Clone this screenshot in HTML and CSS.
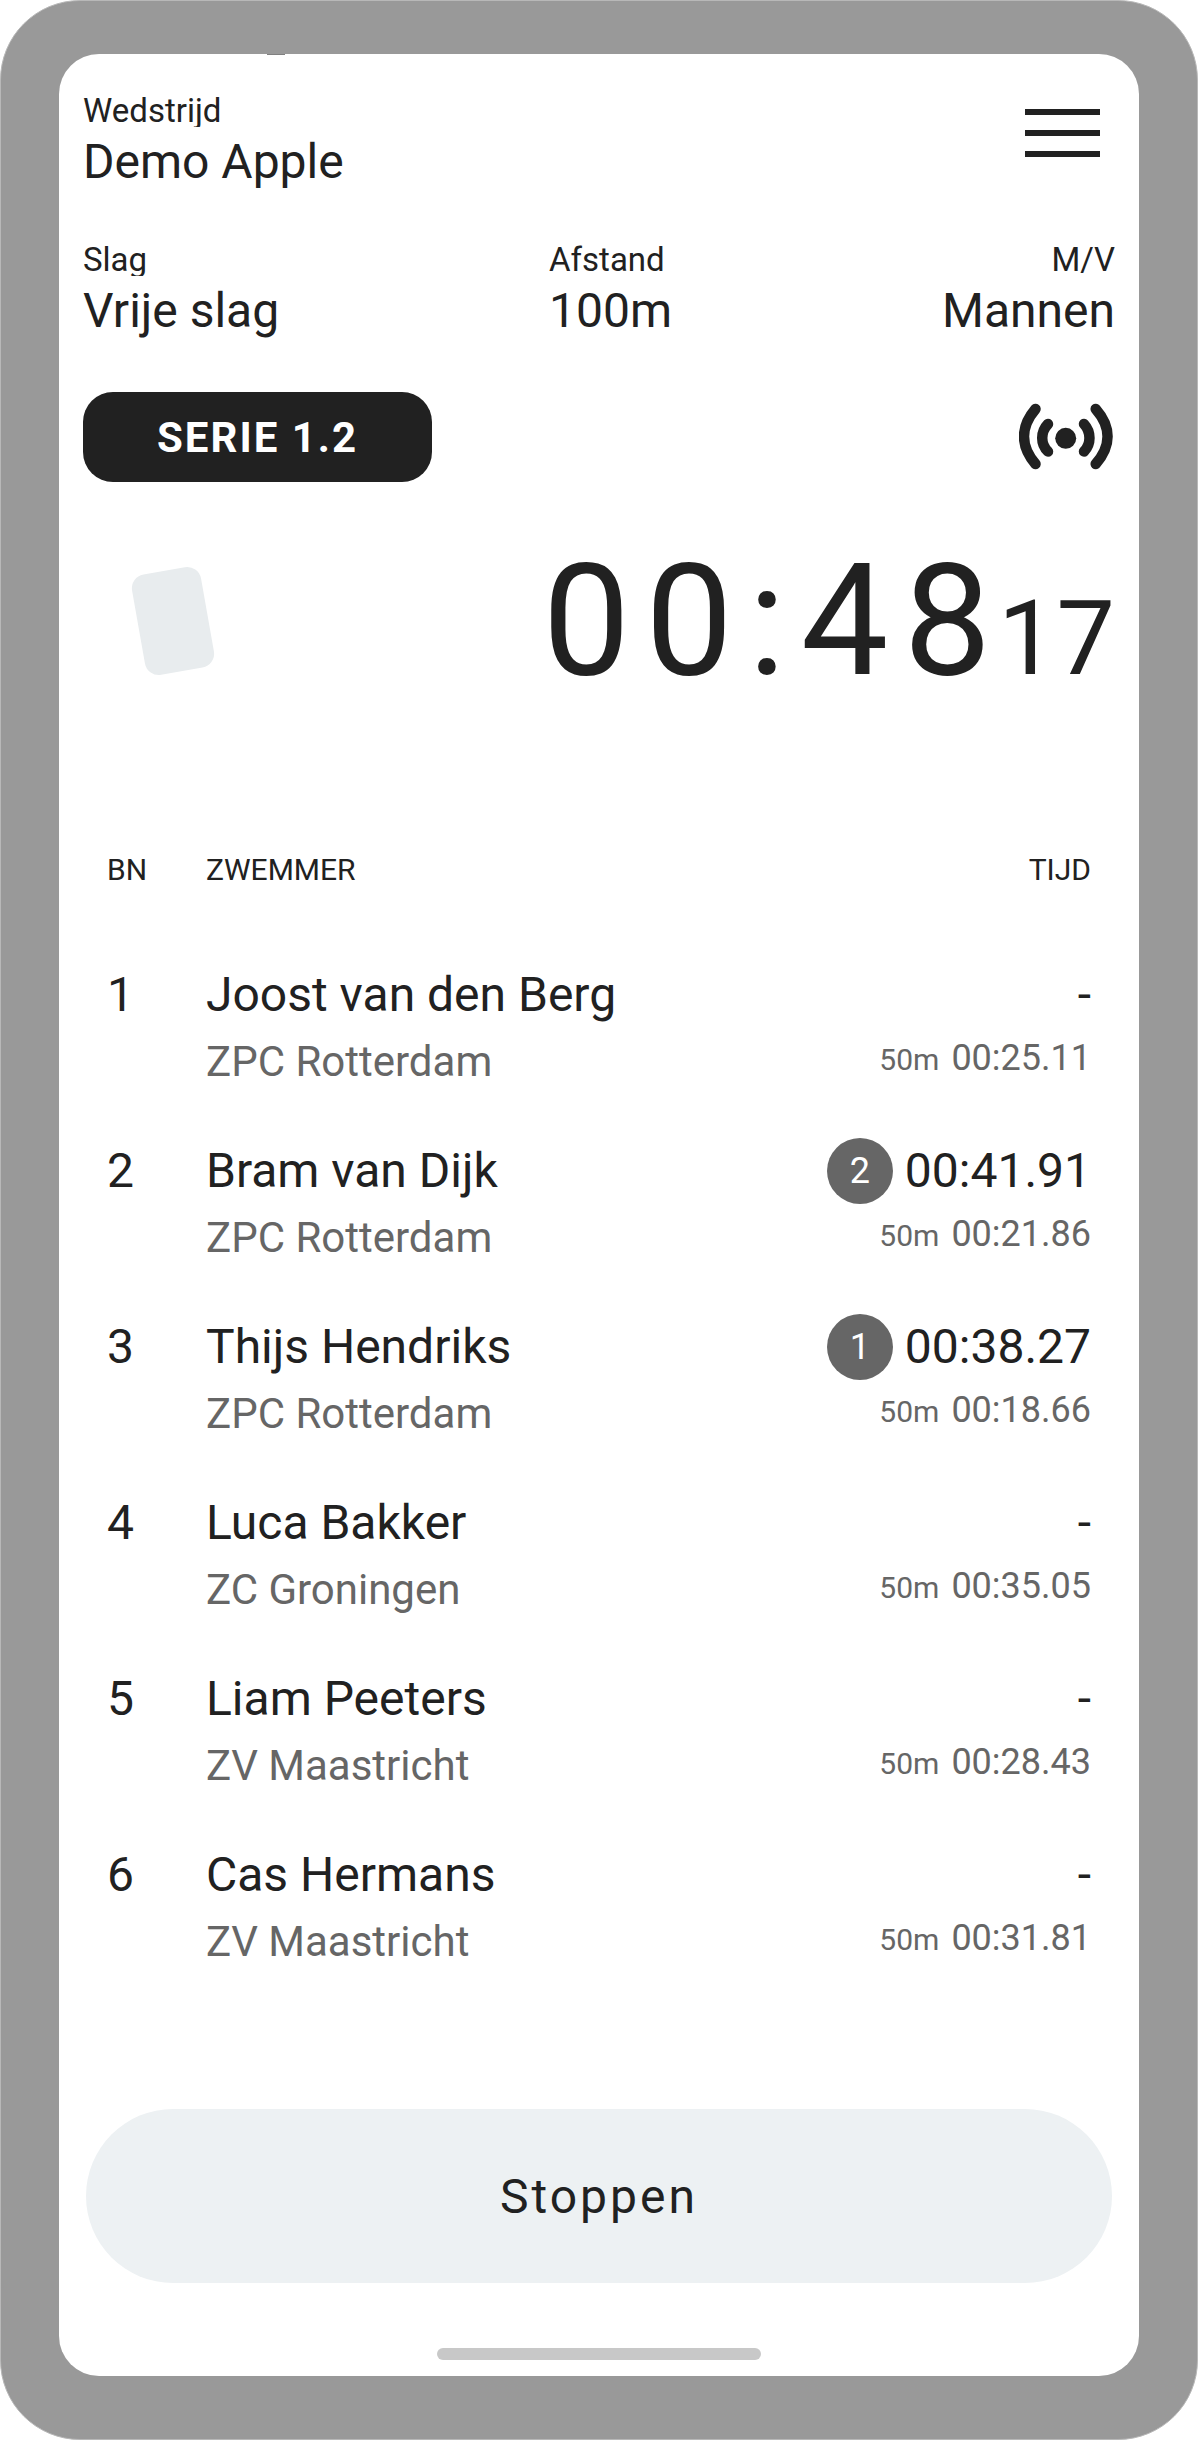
FILE: index.html
```html
<!DOCTYPE html>
<html lang="nl">

<head>
    <meta charset="UTF-8">
    <meta name="viewport" content="width=device-width, initial-scale=1.0">
    <title>Demo Apple - Serie 1.2</title>

    <link rel="stylesheet" href="styles.css">
</head>

<body>
    <div class="phone">
        <main class="screen">
            <header class="flex">
                <div class="info">
                    <span class="label">Wedstrijd</span>
                    <span class="value">Demo Apple</span>
                </div>
                <button class="menu" aria-label="Menu">
                    <span class="bar"></span>
                    <span class="bar"></span>
                    <span class="bar"></span>
                </button>
            </header>

            <section class="details flex">
                <div class="info">
                    <span class="label">Slag</span>
                    <span class="value">Vrije slag</span>
                </div>
                <div class="info">
                    <span class="label">Afstand</span>
                    <span class="value">100m</span>
                </div>
                <div class="info right">
                    <span class="label">M/V</span>
                    <span class="value">Mannen</span>
                </div>
            </section>

            <section class="serieRow flex">
                <button class="serie">SERIE 1.2</button>
                <svg class="signal" width="96" height="68" viewBox="0 0 96 68" fill="none" stroke="#212121" stroke-width="10.500" stroke-linecap="round">
                    <path d="M16.500 6C1.200 24 1.200 43 16.500 61" />
                    <path d="M29 21C21.300 29 21.300 41 29 48.500" />
                    <path d="M65 21C72.300 29 72.300 41 65 48.500" />
                    <path d="M76.700 6C92.500 24 92.500 43 76.700 61" />
                    <circle cx="46.700" cy="35.300" r="10.500" fill="#212121" stroke="none" />
                </svg>
            </section>

            <section class="clockRow flex">
                <div class="card"></div>
                <div class="clock">
                    <span class="seconds">00:48</span>
                    <span class="hundredths">17</span>
                </div>
            </section>

            <table class="swimmers">
                <thead>
                    <tr>
                        <th class="lane">BN</th>
                        <th>ZWEMMER</th>
                        <th class="time">TIJD</th>
                    </tr>
                </thead>
                <tbody>
                    <tr>
                        <td class="lane">1</td>
                        <td>
                            <div class="name">Joost van den Berg</div>
                            <div class="club">ZPC Rotterdam</div>
                        </td>
                        <td class="time">
                            <div class="result">-</div>
                            <div class="split"><small>50m</small>00:25.11</div>
                        </td>
                    </tr>
                    <tr>
                        <td class="lane">2</td>
                        <td>
                            <div class="name">Bram van Dijk</div>
                            <div class="club">ZPC Rotterdam</div>
                        </td>
                        <td class="time">
                            <div class="result"><span class="rank">2</span>00:41.91</div>
                            <div class="split"><small>50m</small>00:21.86</div>
                        </td>
                    </tr>
                    <tr>
                        <td class="lane">3</td>
                        <td>
                            <div class="name">Thijs Hendriks</div>
                            <div class="club">ZPC Rotterdam</div>
                        </td>
                        <td class="time">
                            <div class="result"><span class="rank">1</span>00:38.27</div>
                            <div class="split"><small>50m</small>00:18.66</div>
                        </td>
                    </tr>
                    <tr>
                        <td class="lane">4</td>
                        <td>
                            <div class="name">Luca Bakker</div>
                            <div class="club">ZC Groningen</div>
                        </td>
                        <td class="time">
                            <div class="result">-</div>
                            <div class="split"><small>50m</small>00:35.05</div>
                        </td>
                    </tr>
                    <tr>
                        <td class="lane">5</td>
                        <td>
                            <div class="name">Liam Peeters</div>
                            <div class="club">ZV Maastricht</div>
                        </td>
                        <td class="time">
                            <div class="result">-</div>
                            <div class="split"><small>50m</small>00:28.43</div>
                        </td>
                    </tr>
                    <tr>
                        <td class="lane">6</td>
                        <td>
                            <div class="name">Cas Hermans</div>
                            <div class="club">ZV Maastricht</div>
                        </td>
                        <td class="time">
                            <div class="result">-</div>
                            <div class="split"><small>50m</small>00:31.81</div>
                        </td>
                    </tr>
                </tbody>
            </table>

            <button class="stop">Stoppen</button>
            <div class="homeBar"></div>
        </main>
    </div>
</body>

</html>
```

FILE: styles.css
```css
* {
    box-sizing: border-box;
}

body {
    margin: 0;
    background-color: #fff;
    color: #212121;
    font-family: Roboto, Arial, sans-serif;
    font-size: 48px;
    line-height: 56px;
}

button {
    border: none;
    color: inherit;
    font-family: inherit;
    cursor: pointer;
}

.flex {
    display: flex;
    justify-content: space-between;
}

/* phone */
.phone {
    display: flex;
    min-height: 100vh;
    padding: 53px 58px 63px;
    border: 1px solid #b8b8b8;
    border-radius: 80px;
    background-color: #999;
}

.screen {
    position: relative;
    flex: 1;
    display: flex;
    flex-direction: column;
    padding: 40px 24px 16px;
    border-radius: 40px;
    background-color: #fff;
}

/* edge of the camera */
.screen::before {
    content: "";
    position: absolute;
    top: 0;
    left: 208px;
    width: 18px;
    height: 1px;
    background-color: #808080;
}

/* race info */
.info {
    display: flex;
    flex-direction: column;
    gap: 7px;
}

.right {
    text-align: right;
}

.label {
    overflow: hidden;
    font-size: 33px;
    line-height: 33px;
}

.menu {
    display: flex;
    flex-direction: column;
    align-self: flex-start;
    gap: 15px;
    padding: 15px;
    background: none;
}

.bar {
    width: 75px;
    height: 6px;
    background-color: #212121;
}

.details {
    margin-top: 53px;
}

.serieRow {
    align-items: center;
    margin-top: 53px;
}

.serie {
    height: 90px;
    padding: 0 74px;
    border-radius: 30px;
    background-color: #212121;
    color: #fff;
    font-size: 42px;
    font-weight: bold;
    letter-spacing: 2px;
}

/* stopwatch */
.clockRow {
    align-items: center;
    margin-top: 47px;
}

.card {
    width: 70px;
    height: 102px;
    margin-left: 55px;
    border-radius: 14px;
    background-color: #e8ecee;
    transform: rotate(-10deg);
}

.clock {
    display: flex;
    align-items: baseline;
}

.seconds {
    margin-right: -8px;
    font-size: 156px;
    line-height: 184px;
    letter-spacing: 15px;
}

.hundredths {
    font-size: 104px;
    line-height: 120px;
}

/* swimmers */
.swimmers {
    margin: 139px 24px 0;
    border-collapse: collapse;
}

.swimmers th {
    padding: 0 0 51px;
    font-size: 30px;
    font-weight: normal;
    line-height: 36px;
    text-align: left;
}

.swimmers td {
    padding: 28px 0;
    vertical-align: top;
}

.swimmers .lane {
    width: 99px;
}

.swimmers .time {
    text-align: right;
}

.club {
    margin-top: 14px;
    color: #666;
    font-size: 42px;
    line-height: 50px;
}

.result {
    display: flex;
    align-items: center;
    justify-content: flex-end;
    gap: 12px;
    height: 56px;
}

.rank {
    width: 66px;
    border-radius: 50%;
    background-color: #666;
    color: #fff;
    font-size: 36px;
    line-height: 66px;
    text-align: center;
}

.split {
    margin-top: 14px;
    color: #666;
    font-size: 36px;
    line-height: 42px;
}

.split small {
    margin-right: 12px;
    font-size: 30px;
}

.stop {
    height: 174px;
    margin: auto 3px 65px;
    border-radius: 87px;
    background-color: #edf1f3;
    font-size: 48px;
    letter-spacing: 3px;
}

.homeBar {
    align-self: center;
    width: 324px;
    height: 12px;
    border-radius: 6px;
    background-color: #c8c8c8;
}
```
